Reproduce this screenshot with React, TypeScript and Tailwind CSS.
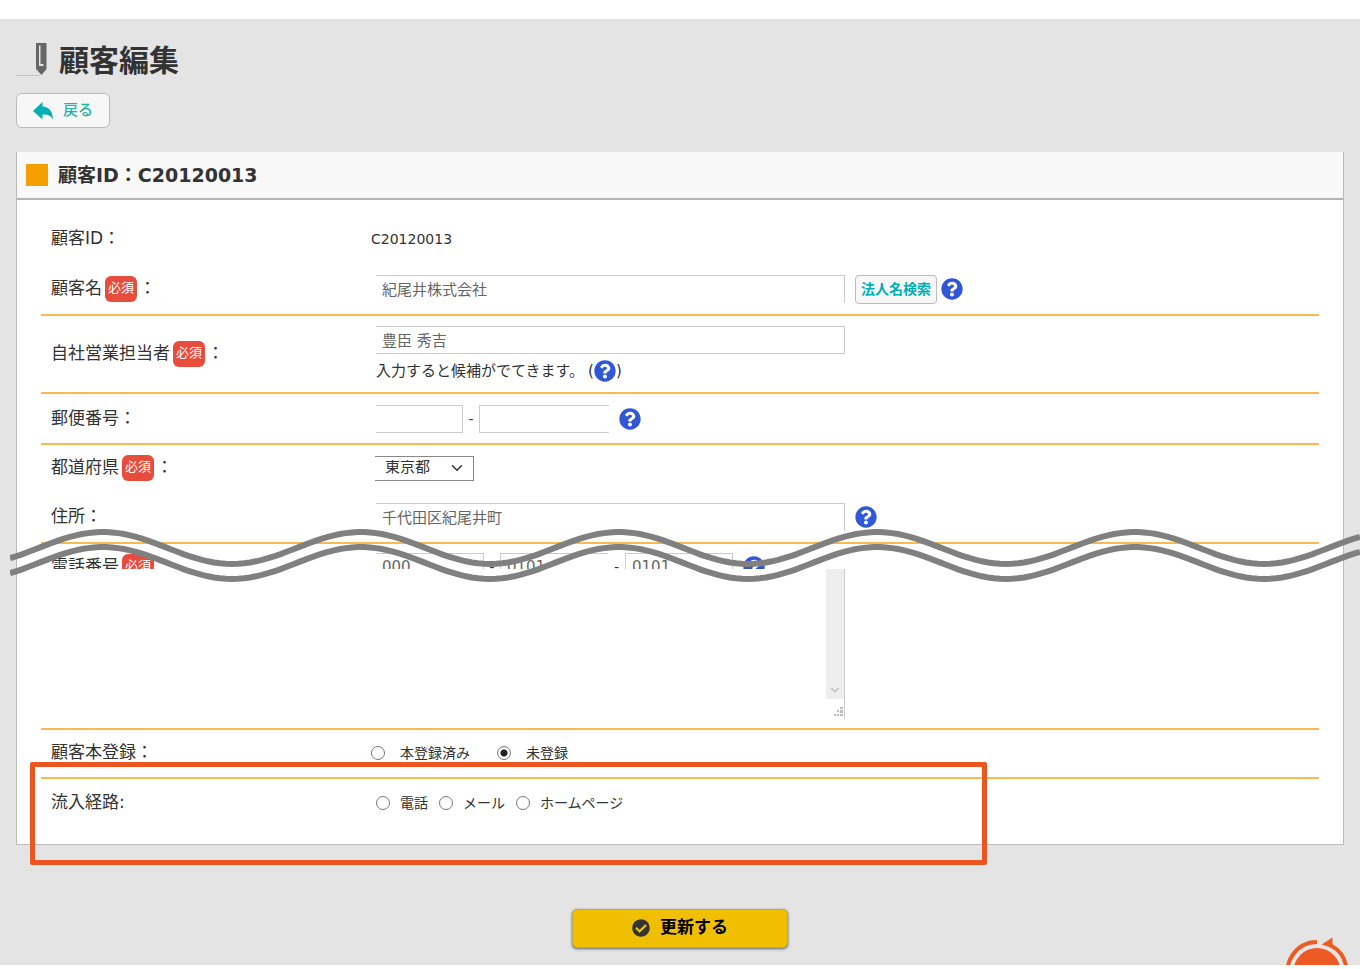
import type { ReactNode } from "react";
import { ChevronDown } from "lucide-react";
import { FaCheckCircle, FaQuestionCircle } from "react-icons/fa";

const inputBase =
  "h-7 border-[#ccc] bg-white px-1.5 pb-0.5 text-[15px] text-[#666] outline-none";

function RequiredBadge() {
  return (
    <span className="mt-0.5 ml-[3px] flex h-[26px] w-8 shrink-0 justify-center rounded-md bg-[#e74c3c] text-[13px] leading-[23px] text-white">
      必須
    </span>
  );
}

function HelpButton() {
  return (
    <button type="button" aria-label="ヘルプ" className="shrink-0 text-[#2f57d6]">
      <FaQuestionCircle className="h-[22px] w-[22px]" />
    </button>
  );
}

interface RowProps {
  label: string;
  htmlFor?: string;
  suffix?: string;
  required?: boolean;
  className: string;
  children: ReactNode;
}

function Row({ label, htmlFor, suffix = "：", required, className, children }: RowProps) {
  const Tag = htmlFor ? "label" : "span";
  return (
    <div className={`flex items-center border-[#f8bb50] pl-2.5 ${className}`}>
      <Tag htmlFor={htmlFor} className="flex w-[325px] shrink-0 items-center pb-0.5 text-[17px] leading-7">
        {label}
        {required && <RequiredBadge />}
        <span className={required ? "ml-0.5" : ""}>{suffix}</span>
      </Tag>
      {children}
    </div>
  );
}

interface RadioProps {
  name: string;
  label: string;
  checked?: boolean;
}

function Radio({ name, label, checked }: RadioProps) {
  return (
    <label className="flex items-center text-sm">
      <input
        type="radio"
        name={name}
        defaultChecked={checked}
        className="mr-[15px] ml-px h-3.5 w-3.5 appearance-none rounded-full border border-[#777] bg-white checked:bg-[radial-gradient(circle,#222_0_3px,white_4px)] group-data-[dense=true]:mr-2.5"
      />
      {label}
    </label>
  );
}

// One crest every 258px, sampled finely enough to look smooth
function wavePath(baseline: number) {
  const points: string[] = [];
  for (let x = 0; x <= 1350; x += 6) {
    const y = baseline - 16 * Math.cos(((x - 93) / 258) * 2 * Math.PI);
    points.push(`${x} ${y.toFixed(1)}`);
  }
  return `M${points.join("L")}`;
}

function WaveBreak() {
  return (
    <svg
      viewBox="0 0 1350 60"
      preserveAspectRatio="none"
      className="pointer-events-none absolute -right-[17px] -bottom-4 -left-[7px] h-[60px] w-[calc(100%+24px)]"
      fill="none"
      stroke="#808080"
      strokeWidth="6"
    >
      <path d={wavePath(23)} />
      <path d={wavePath(38)} />
    </svg>
  );
}

function PageTitle() {
  return (
    <div className="flex h-10 items-center">
      <svg viewBox="0 0 32 36" className="mr-[11px] h-9 w-8" fill="none">
        <path d="M0 34.500H24" stroke="#c4c4c4" />
        <path d="M20 2H30.500V28L25.500 34L20 28Z" fill="#666" />
        <path d="M23 4.500V25H27.500V4.500Z" fill="#e4e4e4" />
        <path d="M24.500 4V23H28.500V4Z" fill="#666" />
      </svg>
      <h1 className="pt-1 text-[30px] leading-10 font-bold">顧客編集</h1>
    </div>
  );
}

function ScrollTopBadge() {
  return (
    <button type="button" aria-label="ページの先頭へ" className="absolute right-2.5 -bottom-[37px]">
      <svg viewBox="0 0 66 66" className="h-[66px] w-[66px]" fill="none">
        <path d="M33 6A29.500 29.500 0 1 0 47 9.500" stroke="#ee5a24" strokeWidth="4" />
        <path d="M37.500 8.500L48.500 1.500V12Z" fill="#ee5a24" />
        <circle cx="33" cy="35.500" r="23.500" fill="#ee5a24" />
      </svg>
    </button>
  );
}

export default function App() {
  return (
    <div className="bg-white pt-[19px] pb-1 font-['DejaVu_Sans','Noto_Sans_CJK_JP',sans-serif] text-[#333]">
      <main className="relative overflow-hidden bg-[#e4e4e4] px-4 pt-5 pb-[17px]">
        <PageTitle />
        <button
          type="button"
          className="mt-3.5 flex h-[35px] items-center gap-2.5 rounded-md border border-[#bbb] bg-[#f7f7f7] px-4 text-[15px] font-medium text-[#1cb5a8]"
        >
          <svg viewBox="0 0 20 18" className="h-[18px] w-5" fill="#00b0b5">
            <path d="M0 9L9.500 0V4.500C16 5 19.500 9 20 17C17 13 14 12.500 9.500 12.500V17.500Z" />
          </svg>
          戻る
        </button>

        <form onSubmit={(e) => e.preventDefault()}>
          <section className="mt-6 border border-t-0 border-[#bbb] bg-white">
            <header className="flex h-12 items-center gap-2.5 border-b-2 border-[#b4b4b4] bg-[#f8f8f8] px-2">
              <span className="ml-px h-[22px] w-[22px] bg-[#f5a000]" />
              <h2 className="text-[19px] font-bold">顧客ID：C20120013</h2>
            </header>

            <div className="relative">
              <div className="h-[369px] overflow-hidden px-6 pt-3.5">
                <Row label="顧客ID" className="h-[50px]">
                  <span className="-ml-[5px] text-sm">C20120013</span>
                </Row>
                <Row label="顧客名" htmlFor="name" required className="h-[52px] border-b-2">
                  <input id="name" defaultValue="紀尾井株式会社" className={`${inputBase} w-[469px] border-t border-r`} />
                  <button
                    type="button"
                    className="mr-1 ml-2.5 h-[29px] rounded-sm border border-[#bbb] bg-[#f7f7f7] px-[5px] text-sm font-bold text-[#00b0b5]"
                  >
                    法人名検索
                  </button>
                  <HelpButton />
                </Row>
                <Row label="自社営業担当者" htmlFor="staff" required className="h-[78px] border-b-2">
                  <div className="pt-1.5">
                    <input id="staff" defaultValue="豊臣 秀吉" className={`${inputBase} w-[469px] border-y border-r`} />
                    <p className="flex h-[34px] items-center text-[15px]">
                      入力すると候補がでてきます。
                      <span className="ml-1">(</span>
                      <HelpButton />)
                    </p>
                  </div>
                </Row>
                <Row label="郵便番号" htmlFor="zip" className="h-[51px] border-b-2">
                  <input id="zip" className={`${inputBase} w-[87px] border-y border-r`} />
                  <span className="w-4 text-center text-sm">-</span>
                  <input aria-label="郵便番号 下4桁" className={`${inputBase} mr-2.5 w-[130px] border-y border-l`} />
                  <HelpButton />
                </Row>
                <Row label="都道府県" htmlFor="pref" required className="h-[46px]">
                  <div className="relative -ml-px">
                    <select
                      id="pref"
                      className="h-[25px] w-[99px] appearance-none border-y border-r border-[#888] bg-white pb-0.5 pl-2.5 text-[15px] leading-none"
                    >
                      <option>東京都</option>
                    </select>
                    <ChevronDown className="pointer-events-none absolute top-1 right-2 h-[18px] w-[18px]" />
                  </div>
                </Row>
                <Row label="住所" htmlFor="address" className="h-[53px] border-b-2">
                  <input id="address" defaultValue="千代田区紀尾井町" className={`${inputBase} mr-2.5 w-[469px] border-t border-r`} />
                  <HelpButton />
                </Row>
                <Row label="電話番号" htmlFor="tel" required className="h-[46px]">
                  <input id="tel" defaultValue="000" className={`${inputBase} w-[108px] border-t border-r`} />
                  <span className="w-4 text-center text-sm">-</span>
                  <input aria-label="電話番号 市内局番" defaultValue="0101" className={`${inputBase} w-[108px] border-t border-l`} />
                  <span className="w-[17px] text-center text-sm">-</span>
                  <input aria-label="電話番号 加入者番号" defaultValue="0101" className={`${inputBase} mr-2.5 w-[108px] border-x border-t`} />
                  <HelpButton />
                </Row>
              </div>
              <WaveBreak />
            </div>

            <div className="px-6">
              <div className="h-[161px] border-b-2 border-[#f8bb50] pl-[335px]">
                <div className="flex h-[150px] w-[469px] border-r border-[#ccc]">
                  <textarea aria-label="備考" className="flex-1 resize-none outline-none" />
                  <div className="flex w-[18px] flex-col text-[#bbb]">
                    <div className="flex h-[130px] flex-col justify-end bg-[#eee] pb-0.5">
                      <ChevronDown className="mx-auto h-3.5 w-3.5" />
                    </div>
                    <svg viewBox="0 0 10 10" className="mt-2 ml-2 h-2.5 w-2.5" fill="currentColor">
                      <path d="M6 0h3v2H6zM3 3h2v2H3zM6 3h3v3H6zM0 7h2v2H0zM3 7h2v2H3zM6 7h3v2H6z" />
                    </svg>
                  </div>
                </div>
              </div>
              <Row label="顧客本登録" className="h-[49px] border-b-2 pb-0.5">
                <div className="-ml-1.5 flex gap-[26px]">
                  <Radio name="registered" label="本登録済み" />
                  <Radio name="registered" label="未登録" checked />
                </div>
              </Row>
              <div className="relative">
                <Row label="流入経路" suffix=":" className="h-[65px] pb-[18px]">
                  <div className="group -ml-px flex gap-2.5" data-dense="true">
                    <Radio name="channel" label="電話" />
                    <Radio name="channel" label="メール" />
                    <Radio name="channel" label="ホームページ" />
                  </div>
                </Row>
                <div className="pointer-events-none absolute -top-[17px] -left-[11px] h-[103px] w-[957px] rounded-xs border-[5px] border-[#ea5520]" />
              </div>
            </div>
          </section>

          <button
            type="submit"
            className="mx-auto mt-16 flex h-[39px] w-[216px] items-center justify-center gap-2.5 rounded-[5px] border border-[#b9a860] bg-[#f0c000] pb-0.5 text-[17px] font-bold text-black shadow-sm shadow-gray-500"
          >
            <FaCheckCircle className="h-[18px] w-[18px] text-[#333]" />
            更新する
          </button>
        </form>

        <ScrollTopBadge />
      </main>
    </div>
  );
}
